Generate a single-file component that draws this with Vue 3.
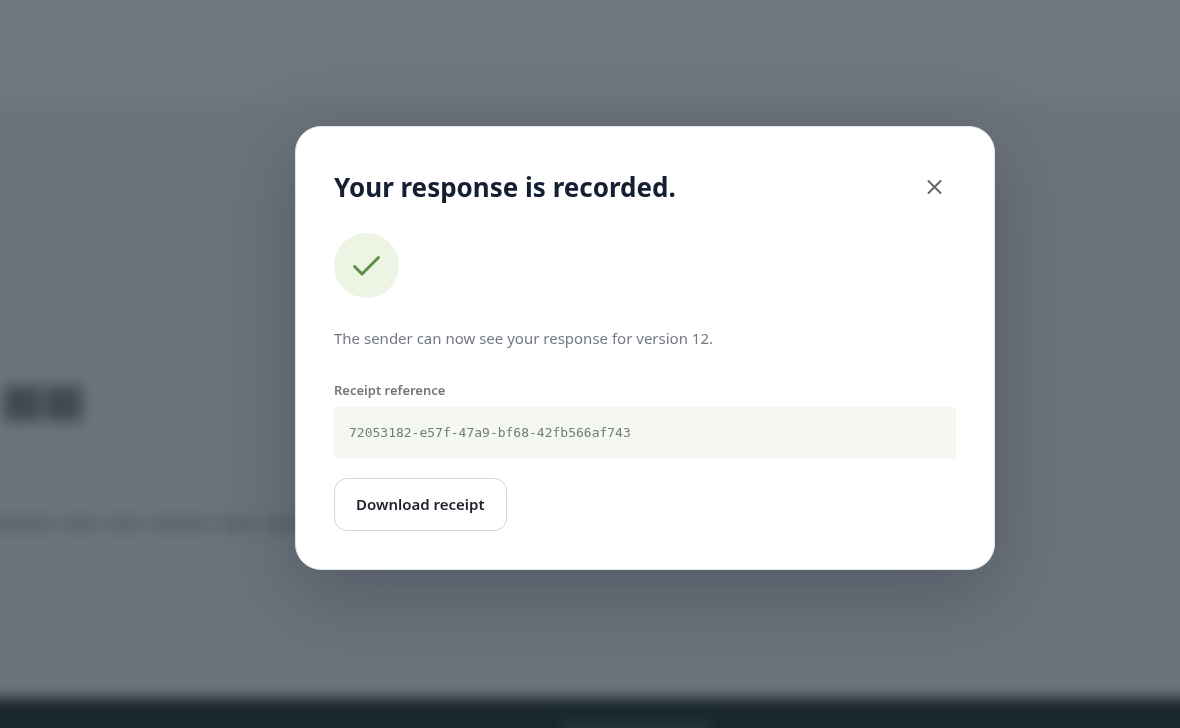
<script setup>
const version = 12
const reference = '72053182-e57f-47a9-bf68-42fb566af743'
</script>

<template>
  <div class="page">
    <div class="backdrop-page" aria-hidden="true">
      <div class="topbar"></div>
      <div class="content">
        <div class="headline"><i></i><i></i></div>
        <div class="copy"><i class="wide"></i><i></i><i></i><i class="wide"></i><i></i><i class="wide"></i></div>
      </div>
      <div class="footer"><i></i></div>
    </div>

    <div class="overlay">
      <section class="dialog" role="dialog" aria-modal="true" aria-labelledby="dialog-title">
        <header class="dialog-header">
          <h1 id="dialog-title">Your response is recorded.</h1>
          <button class="close" type="button" aria-label="Close">
            <svg viewBox="0 0 20 20" width="20" height="20" fill="none" stroke="currentColor" stroke-width="2" stroke-linecap="round">
              <path d="M4.500 4l12 12M16.500 4L4.500 16" />
            </svg>
          </button>
        </header>
        <div class="success">
          <svg viewBox="0 0 32 32" width="32" height="32" fill="none" stroke="currentColor" stroke-width="3" stroke-linecap="round" stroke-linejoin="round">
            <path d="M3.500 16.500l7.500 7.500L27.500 7.500" />
          </svg>
        </div>
        <p class="message">The sender can now see your response for version {{ version }}.</p>
        <div class="label">Receipt reference</div>
        <code class="reference">{{ reference }}</code>
        <button class="download" type="button">Download receipt</button>
      </section>
    </div>
  </div>
</template>

<style>
body {
  margin: 0;
}
</style>

<style scoped>
.page {
  font-family: "Segoe UI", "Noto Sans", "Open Sans", sans-serif;
}
.backdrop-page {
  position: fixed;
  inset: -24px;
  display: flex;
  flex-direction: column;
  overflow: hidden;
  background: #f0f3f0;
  filter: blur(7px);
}
.topbar {
  height: 126px;
  background: #fbfafd;
}
.content {
  flex: 1;
  padding-top: 284px;
}
.headline {
  display: flex;
  gap: 4px;
  padding-left: 28px;
}
.headline i {
  width: 37px;
  height: 35px;
  background: #7d8a87;
}
.copy {
  display: flex;
  gap: 8px;
  margin-top: 96px;
  padding-left: 16px;
}
.copy i {
  width: 36px;
  height: 14px;
  background: #c8cfce;
}
.copy .wide {
  width: 62px;
}
.footer {
  display: flex;
  justify-content: center;
  height: 54px;
  padding-left: 92px;
  background: #233230;
}
.footer i {
  width: 148px;
  height: 12px;
  margin-top: 24px;
  background: #4e5c5a;
}
.overlay {
  position: fixed;
  inset: 0;
  display: flex;
  align-items: center;
  justify-content: center;
  box-sizing: border-box;
  padding: 0 0 32px 110px;
  background: rgba(20, 30, 43, 0.6);
}
.dialog {
  box-sizing: border-box;
  width: 100%;
  max-width: 700px;
  padding: 38px;
  border: 1px solid #dfe4ea;
  border-radius: 26px;
  background: #fff;
  box-shadow: 0 24px 80px rgba(23, 32, 58, 0.3);
}
.dialog-header {
  display: flex;
  align-items: center;
  justify-content: space-between;
}
h1 {
  margin: 0;
  color: #141f33;
  font-size: 26px;
  font-weight: 700;
  line-height: 44px;
}
.close {
  display: grid;
  place-items: center;
  width: 44px;
  height: 44px;
  padding: 0;
  border: 0;
  background: none;
  color: #62666c;
}
.success {
  display: grid;
  place-items: center;
  width: 65px;
  height: 65px;
  margin-top: 24px;
  border-radius: 50%;
  background: #edf4e4;
  color: #5c9145;
}
.message {
  margin: 26px 0 28px;
  color: #747987;
  font-size: 15px;
  line-height: 28px;
}
.label {
  color: #737873;
  font-size: 13px;
  font-weight: 600;
  line-height: 20px;
}
.reference {
  display: block;
  margin: 7px 0 20px;
  padding: 15px;
  background: #f4f8f1;
  color: #737c73;
  font-family: Consolas, "DejaVu Sans Mono", monospace;
  font-size: 13px;
  line-height: 21px;
}
.download {
  padding: 14px 21px;
  border: 1px solid #d3d5d9;
  border-radius: 13px;
  background: #fff;
  color: #1d222e;
  font: inherit;
  font-size: 15px;
  font-weight: 600;
  line-height: 23px;
}
</style>
